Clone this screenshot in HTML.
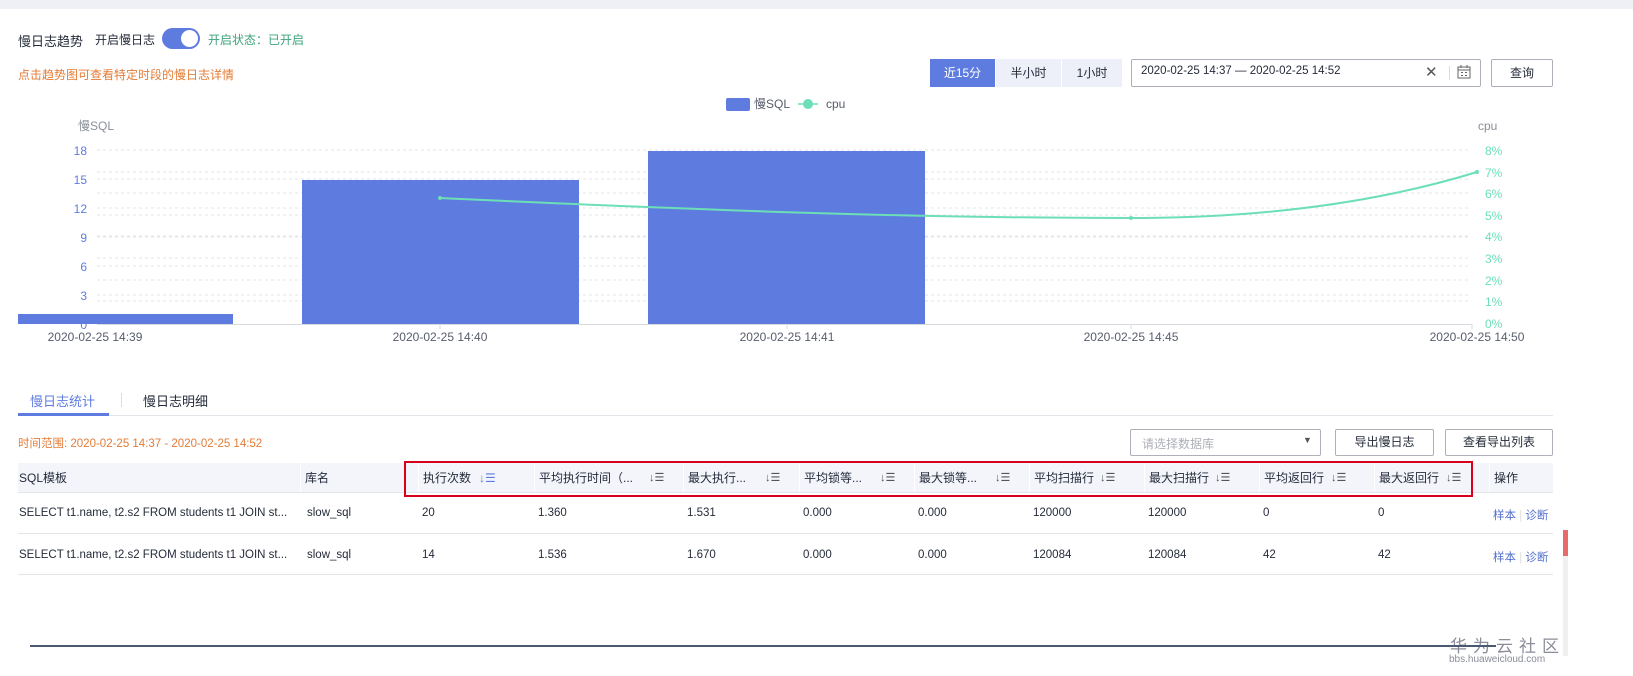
<!DOCTYPE html>
<html><head><meta charset="utf-8">
<style>
*{margin:0;padding:0;box-sizing:border-box}
body{width:1633px;height:676px;background:#fff;font-family:"Liberation Sans","Noto Sans CJK SC",sans-serif;font-size:12px;color:#252b3a;position:relative;overflow:hidden}
.a{position:absolute;white-space:nowrap}
.btn{position:absolute;border:1px solid #adb0b8;background:#fff;text-align:center;border-radius:2px;font-size:12px;color:#252b3a}
.th{position:absolute;top:463px;height:30px;line-height:30px;background:#f3f5fb;font-size:12px;color:#252b3a;padding-left:4px}
.td{position:absolute;font-size:11.5px;color:#252b3a;white-space:nowrap}
</style></head><body>
<div class="a" style="left:0;top:0;width:1633px;height:9px;background:#eef0f5"></div>

<div class="a" style="left:18px;top:31px;font-size:13px">慢日志趋势</div>
<div class="a" style="left:95px;top:31px;font-size:12px">开启慢日志</div>
<div class="a" style="left:162px;top:28px;width:38px;height:21px;border-radius:11px;background:#5e7ce0"></div>
<div class="a" style="left:181px;top:30px;width:17px;height:17px;border-radius:50%;background:#fff"></div>
<div class="a" style="left:208px;top:31px;font-size:12px;color:#3ea37c">开启状态：已开启</div>
<div class="a" style="left:18px;top:66px;font-size:12px;color:#e37c37">点击趋势图可查看特定时段的慢日志详情</div>

<div class="a" style="left:930px;top:59px;width:65px;height:28px;background:#5e7ce0;color:#fff;text-align:center;line-height:28px">近15分</div>
<div class="a" style="left:996px;top:59px;width:65px;height:28px;background:#eef0f9;text-align:center;line-height:28px">半小时</div>
<div class="a" style="left:1062px;top:59px;width:60px;height:28px;background:#eef0f9;text-align:center;line-height:28px">1小时</div>
<div class="a" style="left:1131px;top:59px;width:350px;height:28px;border:1px solid #adb0b8;border-radius:2px"></div>
<div class="a" style="left:1141px;top:65px;font-size:11.5px">2020-02-25 14:37 — 2020-02-25 14:52</div>
<div class="a" style="left:1425px;top:63px;font-size:15px;color:#555">✕</div>
<div class="a" style="left:1449px;top:66px;width:1px;height:14px;background:#ddd"></div>
<svg class="a" style="left:1457px;top:65px" width="14" height="14" viewBox="0 0 14 14"><rect x="1" y="2" width="12" height="11" fill="none" stroke="#666"/><line x1="1" y1="5" x2="13" y2="5" stroke="#666"/><line x1="4" y1="0" x2="4" y2="3" stroke="#666"/><line x1="10" y1="0" x2="10" y2="3" stroke="#666"/><rect x="4" y="7" width="2" height="1" fill="#666"/><rect x="8" y="7" width="2" height="1" fill="#666"/><rect x="4" y="10" width="2" height="1" fill="#666"/><rect x="8" y="10" width="2" height="1" fill="#666"/></svg>
<div class="btn" style="left:1491px;top:59px;width:62px;height:28px;line-height:26px">查询</div>

<svg class="a" style="left:0;top:90px" width="1560" height="260" viewBox="0 90 1560 260">
<rect x="726" y="98" width="24" height="13" rx="2" fill="#5e7ce0"/>
<text x="754" y="108" font-size="12" fill="#575d6c" font-family="Liberation Sans,Noto Sans CJK SC,sans-serif">慢SQL</text>
<line x1="798" y1="104" x2="818" y2="104" stroke="#6cdfb6" stroke-width="1.5"/><circle cx="808" cy="104" r="5" fill="#6cdfb6"/>
<text x="826" y="108" font-size="12" fill="#575d6c" font-family="Liberation Sans,sans-serif">cpu</text>
<text x="78" y="130" font-size="12" fill="#8a8e99" font-family="Liberation Sans,Noto Sans CJK SC,sans-serif">慢SQL</text>
<text x="1478" y="130" font-size="12" fill="#8a8e99" font-family="Liberation Sans,sans-serif">cpu</text>
<g stroke="#e3e5ea" stroke-dasharray="3,3" stroke-width="1">
<line x1="97" y1="150" x2="1470" y2="150"/><line x1="97" y1="179" x2="1470" y2="179"/><line x1="97" y1="208" x2="1470" y2="208"/><line x1="97" y1="237" x2="1470" y2="237"/><line x1="97" y1="266" x2="1470" y2="266"/><line x1="97" y1="295" x2="1470" y2="295"/>
<line x1="97" y1="172" x2="1470" y2="172"/><line x1="97" y1="193" x2="1470" y2="193"/><line x1="97" y1="215" x2="1470" y2="215"/><line x1="97" y1="236" x2="1470" y2="236"/><line x1="97" y1="258" x2="1470" y2="258"/><line x1="97" y1="280" x2="1470" y2="280"/><line x1="97" y1="301" x2="1470" y2="301"/>
</g>
<g font-size="12" fill="#5e7ce0" text-anchor="end" font-family="Liberation Sans,sans-serif">
<text x="87" y="155">18</text><text x="87" y="184">15</text><text x="87" y="213">12</text><text x="87" y="242">9</text><text x="87" y="271">6</text><text x="87" y="300">3</text><text x="87" y="329">0</text></g>
<g font-size="12" fill="#6cdfb6" font-family="Liberation Sans,sans-serif">
<text x="1485" y="155">8%</text><text x="1485" y="177">7%</text><text x="1485" y="198">6%</text><text x="1485" y="220">5%</text><text x="1485" y="241">4%</text><text x="1485" y="263">3%</text><text x="1485" y="285">2%</text><text x="1485" y="306">1%</text><text x="1485" y="328">0%</text></g>
<rect x="18" y="314" width="215" height="10" fill="#5e7ce0"/>
<rect x="302" y="180" width="277" height="144" fill="#5e7ce0"/>
<rect x="648" y="151" width="277" height="173" fill="#5e7ce0"/>
<line x1="97" y1="324.5" x2="1472" y2="324.5" stroke="#d8dbe2"/>
<g stroke="#d8dbe2"><line x1="440" y1="324" x2="440" y2="329"/><line x1="787" y1="324" x2="787" y2="329"/><line x1="1131" y1="324" x2="1131" y2="329"/><line x1="1472" y1="324" x2="1472" y2="329"/></g>
<path d="M440 198 C700 210 900 218 1131 218 C1250 218 1370 205 1477 172" fill="none" stroke="#6cdfb6" stroke-width="2"/>
<circle cx="440" cy="198" r="2" fill="#6cdfb6"/><circle cx="1131" cy="218" r="2" fill="#6cdfb6"/><circle cx="1477" cy="172" r="2" fill="#6cdfb6"/>
<g font-size="12" fill="#575d6c" text-anchor="middle" font-family="Liberation Sans,sans-serif">
<text x="95" y="341">2020-02-25 14:39</text><text x="440" y="341">2020-02-25 14:40</text><text x="787" y="341">2020-02-25 14:41</text><text x="1131" y="341">2020-02-25 14:45</text><text x="1477" y="341">2020-02-25 14:50</text></g>
</svg>

<div class="a" style="left:30px;top:391px;font-size:13px;color:#5e7ce0">慢日志统计</div>
<div class="a" style="left:121px;top:393px;width:1px;height:14px;background:#ddd"></div>
<div class="a" style="left:143px;top:391px;font-size:13px;color:#252b3a">慢日志明细</div>
<div class="a" style="left:18px;top:415px;width:1535px;height:1px;background:#e3e5ea"></div>
<div class="a" style="left:18px;top:413px;width:91px;height:3px;background:#5e7ce0"></div>

<div class="a" style="left:18px;top:435px;font-size:11.5px;color:#e37c37">时间范围: 2020-02-25 14:37 - 2020-02-25 14:52</div>
<div class="a" style="left:1130px;top:429px;width:191px;height:27px;border:1px solid #adb0b8;border-radius:2px"></div>
<div class="a" style="left:1142px;top:435px;color:#adb0b8">请选择数据库</div>
<div class="a" style="left:1303px;top:435px;font-size:9px;color:#555">▼</div>
<div class="btn" style="left:1335px;top:429px;width:99px;height:27px;line-height:25px">导出慢日志</div>
<div class="btn" style="left:1445px;top:429px;width:108px;height:27px;line-height:25px">查看导出列表</div>

<div class="th" style="left:18px;width:282px;padding-left:1px">SQL模板</div>
<div class="th" style="left:301px;width:117px">库名</div>
<div class="th" style="left:419px;width:115px">执行次数</div>
<div class="th" style="left:535px;width:148px">平均执行时间（...</div>
<div class="th" style="left:684px;width:115px">最大执行...</div>
<div class="th" style="left:800px;width:114px">平均锁等...</div>
<div class="th" style="left:915px;width:114px">最大锁等...</div>
<div class="th" style="left:1030px;width:114px">平均扫描行</div>
<div class="th" style="left:1145px;width:114px">最大扫描行</div>
<div class="th" style="left:1260px;width:114px">平均返回行</div>
<div class="th" style="left:1375px;width:114px">最大返回行</div>
<div class="th" style="left:1490px;width:63px">操作</div>
<div class="a" style="left:479px;top:471px;color:#5e7ce0;font-size:12px">↓☰</div>
<div class="a" style="left:649px;top:471px;color:#555;font-size:11px">↓☰</div>
<div class="a" style="left:765px;top:471px;color:#555;font-size:11px">↓☰</div>
<div class="a" style="left:880px;top:471px;color:#555;font-size:11px">↓☰</div>
<div class="a" style="left:995px;top:471px;color:#555;font-size:11px">↓☰</div>
<div class="a" style="left:1100px;top:471px;color:#555;font-size:11px">↓☰</div>
<div class="a" style="left:1215px;top:471px;color:#555;font-size:11px">↓☰</div>
<div class="a" style="left:1331px;top:471px;color:#555;font-size:11px">↓☰</div>
<div class="a" style="left:1446px;top:471px;color:#555;font-size:11px">↓☰</div>
<div class="a" style="left:18px;top:492px;width:1535px;height:1px;background:#e3e5ea"></div>
<div class="a" style="left:404px;top:461px;width:1069px;height:36px;border:2px solid #d9001b"></div>

<div class="td" style="left:19px;top:507px">SELECT t1.name, t2.s2 FROM students t1 JOIN st...</div>
<div class="td" style="left:307px;top:507px">slow_sql</div>
<div class="td" style="left:422px;top:507px">20</div>
<div class="td" style="left:538px;top:507px">1.360</div>
<div class="td" style="left:687px;top:507px">1.531</div>
<div class="td" style="left:803px;top:507px">0.000</div>
<div class="td" style="left:918px;top:507px">0.000</div>
<div class="td" style="left:1033px;top:507px">120000</div>
<div class="td" style="left:1148px;top:507px">120000</div>
<div class="td" style="left:1263px;top:507px">0</div>
<div class="td" style="left:1378px;top:507px">0</div>
<div class="td" style="left:1493px;top:507px;color:#526ecc">样本 <span style="color:#ddd">|</span> 诊断</div>
<div class="a" style="left:18px;top:533px;width:1535px;height:1px;background:#e3e5ea"></div>

<div class="td" style="left:19px;top:549px">SELECT t1.name, t2.s2 FROM students t1 JOIN st...</div>
<div class="td" style="left:307px;top:549px">slow_sql</div>
<div class="td" style="left:422px;top:549px">14</div>
<div class="td" style="left:538px;top:549px">1.536</div>
<div class="td" style="left:687px;top:549px">1.670</div>
<div class="td" style="left:803px;top:549px">0.000</div>
<div class="td" style="left:918px;top:549px">0.000</div>
<div class="td" style="left:1033px;top:549px">120084</div>
<div class="td" style="left:1148px;top:549px">120084</div>
<div class="td" style="left:1263px;top:549px">42</div>
<div class="td" style="left:1378px;top:549px">42</div>
<div class="td" style="left:1493px;top:549px;color:#526ecc">样本 <span style="color:#ddd">|</span> 诊断</div>
<div class="a" style="left:18px;top:574px;width:1535px;height:1px;background:#e3e5ea"></div>

<div class="a" style="left:1563px;top:530px;width:5px;height:26px;background:#e86a6a"></div>
<div class="a" style="left:1563px;top:556px;width:5px;height:100px;background:#f0f0f0"></div>
<div class="a" style="left:1450px;top:632px;font-size:17px;color:#8a8e99;letter-spacing:6px">华为云社区</div>
<div class="a" style="left:1449px;top:654px;font-size:10px;color:#8a8e99">bbs.huaweicloud.com</div>
<div class="a" style="left:30px;top:645px;width:1466px;height:2px;background:#4a5a70"></div>
</body></html>
